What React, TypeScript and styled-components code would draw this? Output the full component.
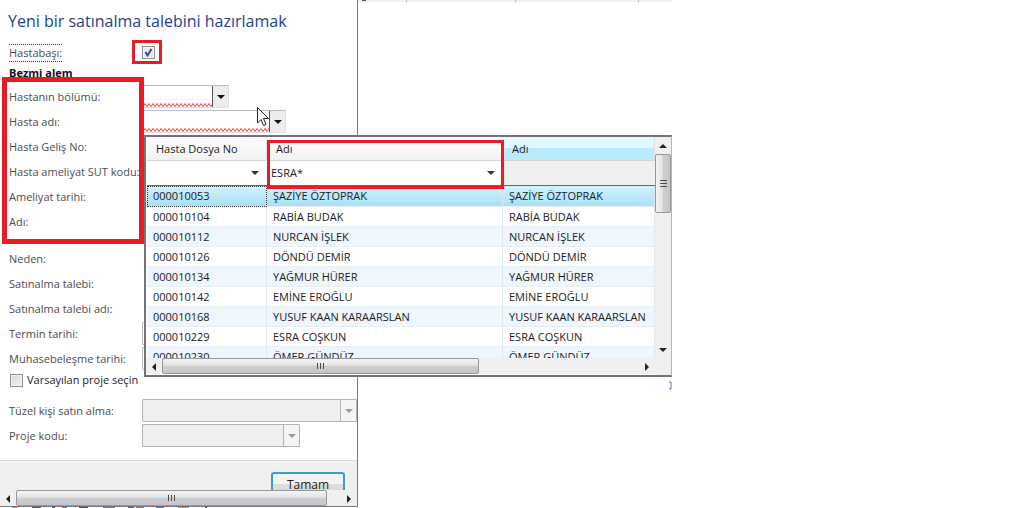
import React, { useState } from "react";
import styled, { createGlobalStyle, css } from "styled-components";

const Global = createGlobalStyle`
  * { box-sizing: border-box; }
  html, body { margin: 0; height: 100%; background: #fff; overflow: hidden; }
  body, input, button, table {
    font-family: "Open Sans", "Segoe UI", sans-serif;
    font-size: 11px;
    line-height: 16px;
    color: #1b1b1b;
  }
  #root { height: 100%; }
`;

const Page = styled.div`
  display: grid;
  grid-template-columns: 358px 1fr;
  height: 100%;
`;

const DialogColumn = styled.div`
  display: flex;
  flex-direction: column;
  min-height: 0;
`;

const Dialog = styled.form`
  flex: 1;
  display: flex;
  flex-direction: column;
  min-height: 0;
  border-right: 1px solid #77777c;
  border-bottom: 1px solid #77777c;
`;

const Body = styled.div`
  flex: none;
  padding: 10px 0 12px;
`;

const Title = styled.h1`
  margin: 0 0 8px;
  padding-left: 8px;
  font-size: 16px;
  line-height: 22px;
  font-weight: 400;
  color: #1f3f94;
  white-space: nowrap;
`;

const Row = styled.div`
  position: relative;
  display: grid;
  grid-template-columns: 133px 1fr;
  align-items: center;
  height: 25px;
  padding-left: 9px;
`;

const Label = styled.label<{ $focused?: boolean }>`
  justify-self: start;
  white-space: nowrap;
  color: #4c4c4e;
  ${(p) =>
    p.$focused &&
    css`
      border-top: 1px dotted #333;
      border-bottom: 1px dotted #333;
    `}
`;

const SectionTitle = styled.h2`
  margin: 0;
  padding-left: 9px;
  font-size: 11px;
  line-height: 16px;
  font-weight: 700;
  color: #111;
`;

const Mark = styled.span<{ $weight: number }>`
  position: absolute;
  border: ${(p) => p.$weight}px solid #e81c24;
  pointer-events: none;
`;

const CheckMark = styled(Mark)`
  left: -10px;
  top: -6px;
  width: 30px;
  height: 24px;
`;

const GroupMark = styled(Mark)`
  left: 2px;
  top: -7px;
  width: 142px;
  height: 167px;
  z-index: 3;
`;

const FilterMark = styled(Mark)`
  left: 121px;
  top: 3px;
  width: 237px;
  height: 49px;
`;

const Group = styled.div`
  position: relative;
  margin: 3px 0 12px;
`;

const CheckHolder = styled.span`
  position: relative;
  display: flex;
`;

const Check = styled.input`
  appearance: none;
  width: 13px;
  height: 13px;
  margin: 0;
  border: 1px solid #8e8f8f;
  background: linear-gradient(135deg, #d2d5d8, #f6f6f6);
  box-shadow: inset 0 0 0 1px #f4f4f4;
  &:checked {
    background: url("data:image/svg+xml,%3Csvg xmlns='http://www.w3.org/2000/svg' viewBox='0 0 11 11'%3E%3Cpath d='M2.5 5 L4.5 8.5 L8.5 2' fill='none' stroke='%2334437f' stroke-width='1.8'/%3E%3C/svg%3E")
      #e6eaf0;
  }
`;

const CheckRow = styled.div`
  display: flex;
  align-items: center;
  gap: 4px;
  height: 18px;
  margin-bottom: 9px;
  padding-left: 10px;
  label { color: #1b1b1b; }
`;

const Combo = styled.div<{ $width: number; $disabled?: boolean; $error?: boolean }>`
  position: relative;
  display: flex;
  width: ${(p) => p.$width}px;
  height: 23px;
  border: 1px solid ${(p) => (p.$disabled ? "#b4b4b4" : "#b9bbc0")};
  border-radius: 1px;
  background: ${(p) => (p.$disabled ? "#efefef" : "#fff")};
  ${(p) => p.$error && "border-right-color: #dedede; border-bottom-color: #e4e4e4;"}
`;

const ComboInput = styled.input`
  flex: 1;
  min-width: 0;
  padding: 0 4px;
  border: 0;
  outline: 0;
  background: transparent;
`;

const ComboButton = styled.button<{ $error?: boolean }>`
  display: grid;
  place-items: center;
  width: 16px;
  padding: 0;
  border: 0;
  border-left: 1px solid ${(p) => (p.$error ? "#55555a" : "#b4b4b4")};
  background: ${(p) => (p.$error ? "#ececec" : "#f4f4f4")};
`;

const Squiggle = styled.svg`
  position: absolute;
  left: 0;
  bottom: 0;
  width: calc(100% - 16px);
  height: 4px;
`;

const Pointer = styled.svg`
  position: absolute;
  left: 257px;
  top: -2px;
  z-index: 4;
  width: 12px;
  height: 20px;
`;

const Footer = styled.div`
  flex: 1 1 0;
  display: flex;
  justify-content: flex-end;
  align-items: flex-start;
  min-height: 0;
  overflow: hidden;
  padding: 11px 12px 0 0;
  border-top: 1px solid #dcdcdc;
  background: #f0f0f0;
`;

const OkButton = styled.button`
  flex: none;
  width: 74px;
  height: 25px;
  padding: 0;
  border: 2px solid #3c9fc4;
  border-radius: 3px;
  background: linear-gradient(#f4f4f4 50%, #dedede 50%, #d4d4d4);
  font-size: 12px;
`;

const HBar = styled.div`
  display: flex;
  flex: none;
  align-items: stretch;
  height: 16px;
  background: #f0f0f0;
`;

const VBar = styled.div`
  grid-row: 1;
  grid-column: 2;
  display: flex;
  flex-direction: column;
  background: #f0f0f0;
`;

const ArrowButton = styled.button`
  display: grid;
  place-items: center;
  flex: none;
  width: 16px;
  height: 17px;
  padding: 0;
  border: 0;
  background: transparent;
`;

const Thumb = styled.div<{ $vertical?: boolean; $end: number }>`
  flex: 1;
  display: flex;
  flex-direction: ${(p) => (p.$vertical ? "column" : "row")};
  align-items: center;
  justify-content: center;
  gap: 1px;
  border: 1px solid #97979a;
  border-radius: 2px;
  background: linear-gradient(
    ${(p) => (p.$vertical ? "90deg" : "180deg")},
    #f4f4f4, #e4e4e5 45%, #cfcfd2 50%, #c6c6ca
  );
  ${(p) => (p.$vertical ? `margin-bottom: ${p.$end}px;` : `margin-right: ${p.$end}px;`)}
  i {
    ${(p) => (p.$vertical ? "width: 7px; height: 2px;" : "width: 2px; height: 6px;")}
    border: 0 solid #4a4a4e;
    ${(p) => (p.$vertical ? "border-top-width: 1px;" : "border-left-width: 1px;")}
  }
`;

const Popup = styled.div`
  position: absolute;
  left: 144px;
  top: 26px;
  z-index: 2;
  display: grid;
  grid-template-columns: 1fr 16px;
  grid-template-rows: 221px 17px;
  width: 528px;
  border: solid #737378;
  border-width: 2px 1px 2px 2px;
  border-right-color: #b6b6ba;
  background: #fff;
`;

const TableClip = styled.div`
  overflow: hidden;
  padding-left: 1px;
`;

const Table = styled.table`
  width: 100%;
  table-layout: fixed;
  border-collapse: separate;
  border-spacing: 0;
  white-space: nowrap;
`;

const HeadCell = styled.th<{ $active?: boolean }>`
  height: 24px;
  padding: 0 9px;
  text-align: left;
  font-weight: 400;
  border-bottom: 1px solid #d5d5d5;
  border-right: 1px solid #e0e0e0;
  background: ${(p) =>
    p.$active
      ? "linear-gradient(#dff7ff 45%, #b9ebfa 50%)"
      : "linear-gradient(#fff, #f2f2f4)"};
`;

const FilterCell = styled.td<{ $off?: boolean }>`
  height: 25px;
  padding: 0;
  border-bottom: 1px solid #66666a;
  background: ${(p) => (p.$off ? "#f0f0f0" : "#fff")};
`;

const FilterBox = styled.div`
  display: flex;
  align-items: center;
  padding-right: 8px;
`;

const Cell = styled.td`
  height: 20px;
  padding: 0 0 0 6px;
  border-right: 1px solid #dfe8f2;
  border-bottom: 1px solid #e6eef6;
  overflow: hidden;
`;

const DataRow = styled.tr<{ $selected: boolean }>`
  &:nth-child(odd) { background: #f0f6fd; }
  ${(p) =>
    p.$selected &&
    css`
      &&& { background: linear-gradient(#d3f1fb, #a5dff5); }
      ${Cell} { height: 21px; }
      ${Cell}:first-child { outline: 1px dotted #333; outline-offset: -1px; }
    `}
`;

const Corner = styled.div`
  background: #f0f0f0;
`;

const Backdrop = styled.main`
  position: relative;
`;

const Peek = styled.svg`
  display: block;
  width: 314px;
  height: 392px;
`;

const Desktop = styled.svg`
  display: block;
  width: 100%;
  height: 1px;
  flex: none;
`;

type Dir = "down" | "up" | "left" | "right";
const shapes: Record<Dir, string> = {
  down: "0,2 8,2 4,6",
  up: "0,6 8,6 4,2",
  left: "6,0 6,8 2,4",
  right: "2,0 2,8 6,4",
};

const Arrow = ({ dir = "down", color = "#222" }: { dir?: Dir; color?: string }) => (
  <svg width="8" height="8" viewBox="0 0 8 8" aria-hidden="true">
    <polygon points={shapes[dir]} fill={color} />
  </svg>
);

const wave = "M0 3.5 " + Array.from({ length: 80 }, (_, i) => `L${i * 2 + 2} ${i % 2 ? 3.5 : 0.5}`).join(" ");

function ComboBox({ id, width, disabled, error }: { id: string; width: number; disabled?: boolean; error?: boolean }) {
  return (
    <Combo $width={width} $disabled={disabled} $error={error}>
      <ComboInput id={id} disabled={disabled} />
      {error && (
        <Squiggle aria-hidden="true">
          <path d={wave} fill="none" stroke="#ee3a3a" />
        </Squiggle>
      )}
      <ComboButton type="button" $error={error} disabled={disabled} aria-label="Aç">
        <Arrow color={disabled ? "#9a9a9a" : "#111"} />
      </ComboButton>
    </Combo>
  );
}

function Grip() {
  return (
    <>
      <i />
      <i />
      <i />
    </>
  );
}

const records = [
  ["000010053", "ŞAZİYE ÖZTOPRAK"],
  ["000010104", "RABİA BUDAK"],
  ["000010112", "NURCAN İŞLEK"],
  ["000010126", "DÖNDÜ DEMİR"],
  ["000010134", "YAĞMUR HÜRER"],
  ["000010142", "EMİNE EROĞLU"],
  ["000010168", "YUSUF KAAN KARAARSLAN"],
  ["000010229", "ESRA COŞKUN"],
  ["000010230", "ÖMER GÜNDÜZ"],
];

// [x, width, colour] of the taskbar fragments that show below the dialog
const fragments: [number, number, string][] = [
  [12, 5, "#c9836a"], [32, 9, "#555"], [52, 3, "#444"], [62, 5, "#a06a4a"],
  [79, 9, "#444"], [103, 12, "#778"], [128, 6, "#5c5c9c"], [136, 8, "#c06a50"],
  [156, 8, "#3f78a8"], [178, 11, "#c98a4a"], [205, 2, "#333"],
];

function PatientPopup() {
  const [selected, setSelected] = useState(0);
  return (
    <Popup>
      <TableClip>
        <Table>
          <colgroup>
            <col width="120" />
            <col width="236" />
            <col />
          </colgroup>
          <thead>
            <tr>
              <HeadCell>Hasta Dosya No</HeadCell>
              <HeadCell>Adı</HeadCell>
              <HeadCell $active>Adı</HeadCell>
            </tr>
            <tr>
              {["", "ESRA*"].map((value, i) => (
                <FilterCell key={i}>
                  <FilterBox>
                    <ComboInput aria-label="Filtre" defaultValue={value} />
                    <Arrow color="#333" />
                  </FilterBox>
                </FilterCell>
              ))}
              <FilterCell $off />
            </tr>
          </thead>
          <tbody>
            {records.map(([no, name], i) => (
              <DataRow key={no} $selected={i === selected} onClick={() => setSelected(i)}>
                <Cell>{no}</Cell>
                <Cell>{name}</Cell>
                <Cell>{name}</Cell>
              </DataRow>
            ))}
          </tbody>
        </Table>
      </TableClip>
      <VBar>
        <ArrowButton type="button" aria-label="Yukarı"><Arrow dir="up" /></ArrowButton>
        <Thumb $vertical $end={128}><Grip /></Thumb>
        <ArrowButton type="button" aria-label="Aşağı"><Arrow dir="down" /></ArrowButton>
      </VBar>
      <HBar>
        <ArrowButton type="button" aria-label="Sola"><Arrow dir="left" /></ArrowButton>
        <Thumb $end={160}><Grip /></Thumb>
        <ArrowButton type="button" aria-label="Sağa"><Arrow dir="right" /></ArrowButton>
      </HBar>
      <Corner />
      <FilterMark $weight={3} />
    </Popup>
  );
}

export default function App() {
  const [bedside, setBedside] = useState(true);
  return (
    <>
      <Global />
      <Page>
        <DialogColumn>
          <Dialog onSubmit={(e) => e.preventDefault()}>
            <Body>
              <Title>Yeni bir satınalma talebini hazırlamak</Title>
              <Row>
                <Label htmlFor="bedside" $focused>Hastabaşı:</Label>
                <CheckHolder>
                  <Check id="bedside" type="checkbox" checked={bedside} onChange={() => setBedside(!bedside)} />
                  <CheckMark $weight={3} />
                </CheckHolder>
              </Row>
              <SectionTitle>Bezmi alem</SectionTitle>
              <Group>
                <Row>
                  <Label htmlFor="unit">Hastanın bölümü:</Label>
                  <ComboBox id="unit" width={87} error />
                </Row>
                <Row>
                  <Label htmlFor="patient">Hasta adı:</Label>
                  <ComboBox id="patient" width={144} error />
                  <PatientPopup />
                  <Pointer viewBox="0 0 12 20" aria-hidden="true">
                    <path
                      d="M.5 .5V16L4 12.5L6.5 18.5L9 17.5L6.5 11.5H11.5Z"
                      fill="#fff"
                      stroke="#222"
                    />
                  </Pointer>
                </Row>
                <Row><Label>Hasta Geliş No:</Label></Row>
                <Row><Label>Hasta ameliyat SUT kodu:</Label></Row>
                <Row><Label>Ameliyat tarihi:</Label></Row>
                <Row><Label>Adı:</Label></Row>
                <GroupMark $weight={5} />
              </Group>
              <Row><Label>Neden:</Label></Row>
              <Row><Label>Satınalma talebi:</Label></Row>
              <Row><Label>Satınalma talebi adı:</Label></Row>
              <Row>
                <Label htmlFor="due">Termin tarihi:</Label>
                <ComboBox id="due" width={144} />
              </Row>
              <Row>
                <Label htmlFor="posting">Muhasebeleşme tarihi:</Label>
                <ComboBox id="posting" width={144} />
              </Row>
              <CheckRow>
                <Check id="project" type="checkbox" />
                <label htmlFor="project">Varsayılan proje seçin</label>
              </CheckRow>
              <Row>
                <Label htmlFor="entity">Tüzel kişi satın alma:</Label>
                <ComboBox id="entity" width={215} disabled />
              </Row>
              <Row>
                <Label htmlFor="code">Proje kodu:</Label>
                <ComboBox id="code" width={158} disabled />
              </Row>
            </Body>
            <Footer>
              <OkButton type="submit">Tamam</OkButton>
            </Footer>
            <HBar>
              <ArrowButton type="button" aria-label="Sola"><Arrow dir="left" /></ArrowButton>
              <Thumb $end={14}><Grip /></Thumb>
              <ArrowButton type="button" aria-label="Sağa"><Arrow dir="right" /></ArrowButton>
            </HBar>
          </Dialog>
          <Desktop aria-hidden="true">
            {fragments.map(([x, w, fill]) => (
              <rect key={x} x={x} width={w} height="1" fill={fill} />
            ))}
          </Desktop>
        </DialogColumn>
        <Backdrop>
          <Peek aria-hidden="true">
            <rect width="314" height="2" fill="#e8f2fa" />
            <path d="M48.5 0v2M157.5 0v2M280.5 0v2" stroke="#a9b6c4" />
            <rect x="4" width="4" height="1" fill="#556" />
            <path d="M311 382h2v7h-2" fill="none" stroke="#3f7fc0" />
          </Peek>
        </Backdrop>
      </Page>
    </>
  );
}
